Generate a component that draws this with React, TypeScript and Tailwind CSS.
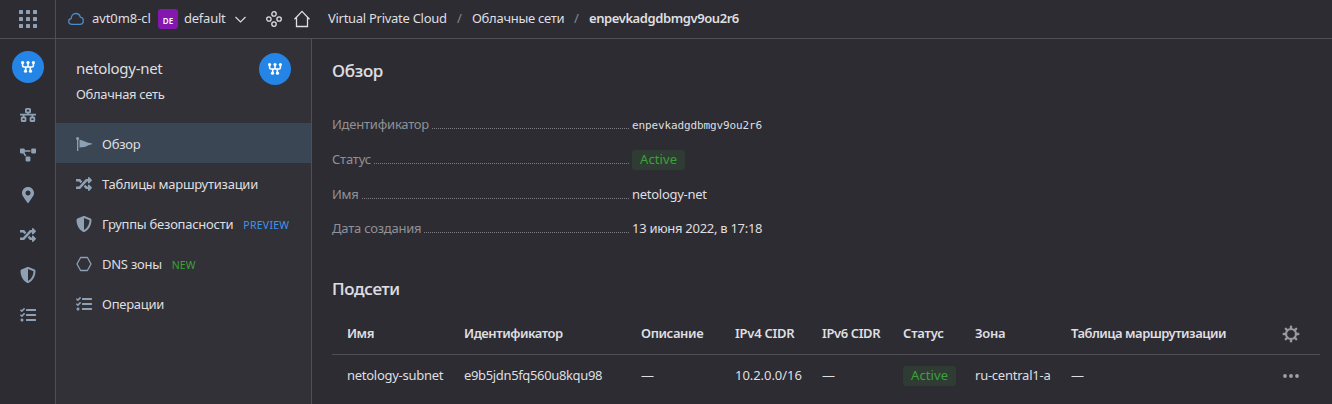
import type { ReactNode } from "react";
import { FaMapMarkerAlt, FaProjectDiagram, FaRandom, FaShieldAlt, FaTasks } from "react-icons/fa";

function NetworkBadge() {
  return (
    <div className="flex size-8 shrink-0 items-center justify-center rounded-full bg-[#2585e6]">
      <svg width="16" height="14" viewBox="0 0 16 14" fill="none" stroke="#fff" strokeWidth="1.600">
        <path d="M2.600 2v3.600q0 1.400 1.400 1.400h8q1.400 0 1.400-1.400V2M8 2v5M5.700 7V11M10.300 7V11" />
        <g fill="#fff" stroke="none">
          <circle cx="2.600" cy="2.500" r="1.600" />
          <circle cx="8" cy="2.500" r="1.600" />
          <circle cx="13.400" cy="2.500" r="1.600" />
          <circle cx="5.500" cy="11.200" r="1.600" />
          <circle cx="10.500" cy="11.200" r="1.600" />
        </g>
      </svg>
    </div>
  );
}

function SubnetsIcon() {
  return (
    <svg width="16" height="14" viewBox="0 0 16 14" fill="none" stroke="currentColor" strokeWidth="1.800">
      <rect x="5.900" y="0.900" width="4.200" height="3.400" rx="0.600" />
      <rect x="1.700" y="9.500" width="3.800" height="3.500" rx="0.600" />
      <rect x="10.500" y="9.500" width="3.800" height="3.500" rx="0.600" />
      <path d="M0 6.700H16M8 4.300V6.600M3.600 6.600V9.600M12.400 6.600V9.600" />
    </svg>
  );
}

function FlagIcon() {
  return (
    <svg width="16" height="16" viewBox="0 0 16 16" fill="currentColor">
      <circle cx="1.600" cy="2.400" r="1.500" />
      <rect x="1" y="2" width="1.300" height="13" />
      <path d="M3.500 3.800C6.500 4.400 9 5.800 12.300 6.700L16 7.500v.8C12.800 8.500 11 10.500 8 11.100 6.400 11.400 5 11.300 3.500 11.500Z" />
    </svg>
  );
}

function HexagonIcon() {
  return (
    <svg width="16" height="16" viewBox="0 0 16 16" fill="none" stroke="currentColor" strokeWidth="1.300" strokeLinejoin="round">
      <path d="M4.600 1.500h6.800L15 8l-3.600 6.500H4.600L1 8Z" />
    </svg>
  );
}

function AppsIcon() {
  return (
    <svg width="18" height="18" viewBox="0 0 18 18" fill="#8ea1b4">
      {[0, 7, 14].map((y) => [0, 7, 14].map((x) => <rect key={`${x}-${y}`} x={x} y={y} width="4" height="4" rx="0.6" />))}
    </svg>
  );
}

function GearIcon() {
  return (
    <svg width="18" height="18" viewBox="0 0 18 18" fill="none" stroke="#99999d">
      <circle cx="9" cy="9" r="5" strokeWidth="2.200" />
      <g strokeWidth="2.400" strokeLinecap="round">
        {[0, 45, 90, 135, 180, 225, 270, 315].map((a) => (
          <path key={a} d="M9 1.700V4" transform={`rotate(${a} 9 9)`} />
        ))}
      </g>
    </svg>
  );
}

function Status() {
  return (
    <span className="flex h-5 items-center rounded-[3px] bg-[#2f3c33] px-2 tracking-[0.1px] text-[#3aa336]">
      <span className="-mt-[2px]">Active</span>
    </span>
  );
}

const rail = [
  <SubnetsIcon />,
  <FaProjectDiagram size={16} />,
  <FaMapMarkerAlt size={16} />,
  <FaRandom size={16} />,
  <FaShieldAlt size={16} />,
  <FaTasks size={16} />,
];

const nav: { icon: ReactNode; label: string; tag?: ReactNode }[] = [
  { icon: <FlagIcon />, label: "Обзор" },
  { icon: <FaRandom size={16} />, label: "Таблицы маршрутизации" },
  {
    icon: <FaShieldAlt size={16} />,
    label: "Группы безопасности",
    tag: <span className="text-[10.5px] tracking-[0.25px] text-[#3d95ee]">PREVIEW</span>,
  },
  {
    icon: <HexagonIcon />,
    label: "DNS зоны",
    tag: <span className="text-[10.5px] tracking-[0px] text-[#3aa336]">NEW</span>,
  },
  { icon: <FaTasks size={16} />, label: "Операции" },
];

const details: { label: string; value: ReactNode; row: string }[] = [
  {
    label: "Идентификатор",
    value: <span className="pt-[3px] font-['DejaVu_Sans_Mono',monospace] text-[11px] tracking-[-0.12px]">enpevkadgdbmgv9ou2r6</span>,
    row: "h-[35px]",
  },
  { label: "Статус", value: <Status />, row: "h-[35px]" },
  { label: "Имя", value: <span className="-mt-[2px]">netology-net</span>, row: "h-[35px]" },
  { label: "Дата создания", value: "13 июня 2022, в 17:18", row: "h-[32px]" },
];

const columns: { title: string; value: ReactNode; width: string; head: string; body: string }[] = [
  { title: "Имя", value: "netology-subnet", width: "w-[117px]", head: "tracking-[-0.5px]", body: "tracking-[-0.27px]" },
  { title: "Идентификатор", value: "e9b5jdn5fq560u8kqu98", width: "w-[177px]", head: "tracking-[-0.45px]", body: "tracking-[-0.35px]" },
  { title: "Описание", value: "—", width: "w-[94px]", head: "tracking-[-0.38px]", body: "" },
  { title: "IPv4 CIDR", value: "10.2.0.0/16", width: "w-[87px]", head: "tracking-[-0.25px]", body: "tracking-[-0.05px]" },
  { title: "IPv6 CIDR", value: "—", width: "w-[81px]", head: "tracking-[-0.4px]", body: "" },
  { title: "Статус", value: <Status />, width: "w-[72px]", head: "tracking-[-0.2px]", body: "" },
  { title: "Зона", value: "ru-central1-a", width: "w-[96px]", head: "tracking-[-0.3px]", body: "tracking-[-0.24px]" },
  { title: "Таблица маршрутизации", value: "—", width: "w-[211px]", head: "tracking-[-0.5px]", body: "" },
];

export default function App() {
  return (
    <div className="flex h-[404px] w-[1332px] flex-col overflow-hidden bg-[#2d2c33] font-['Noto_Sans',sans-serif] text-[13px] leading-5 tracking-[-0.28px] whitespace-nowrap text-[#dfdfe0]">
      <header className="flex h-[39px] shrink-0 border-b border-[#504f55]">
        <div className="flex w-14 shrink-0 items-center justify-center border-r border-[#504f55]">
          <AppsIcon />
        </div>
        <div className="flex h-[38px] w-[272px] shrink-0 items-center pl-3">
          <svg className="shrink-0" width="16" height="14" viewBox="0 0 16 14" fill="none" stroke="#4c8bc9" strokeWidth="1.300">
            <path d="M4 12.400C2 12.400.7 11.200.7 9.500.7 7.900 1.700 6.900 3.200 6.700 3.200 3.500 5.200 1.500 7.800 1.500c2.400 0 4 1.400 4.500 3.700 1.800.2 3 1.500 3 3.500 0 2.200-1.400 3.700-3.500 3.700Z" />
          </svg>
          <span className="-mt-[2px] ml-2 w-[66px] tracking-[-0.08px]">avt0m8-cl</span>
          <span className="flex size-5 items-center justify-center rounded-[3px] bg-[#8317ae] pt-[3px] text-[8px] font-semibold tracking-[0px] text-white">DE</span>
          <span className="-mt-[2px] ml-[6px] w-[51px] tracking-[-0.23px]">default</span>
          <svg className="shrink-0" width="11" height="7" viewBox="0 0 11 7" fill="none" stroke="currentColor" strokeWidth="1.100">
            <path d="M.5 1 5.500 6 10.500 1" />
          </svg>
          <svg className="ml-[20px] shrink-0" width="16" height="16" viewBox="0 0 16 16" fill="none" stroke="currentColor" strokeWidth="1.300">
            <circle cx="8" cy="2.900" r="2.200" />
            <circle cx="2.900" cy="8" r="2.200" />
            <circle cx="13.100" cy="8" r="2.200" />
            <circle cx="8" cy="13.100" r="2.200" />
          </svg>
          <svg className="ml-3 shrink-0" width="17" height="18" viewBox="0 0 17 18" fill="none" stroke="currentColor" strokeWidth="1.300">
            <path d="M.5 9.200 8 1.400 15.500 9.200M2.500 7.400V16.500H13.500V7.400" />
          </svg>
        </div>
        <nav className="flex h-9 items-center">
          <span className="w-[120px]">Virtual Private Cloud</span>
          <span className="ml-[9px] w-[15px] text-[#8a8a8e]">/</span>
          <span className="w-[93px]">Облачные сети</span>
          <span className="ml-[9px] w-[15px] text-[#8a8a8e]">/</span>
          <span className="font-semibold tracking-[-0.42px]">enpevkadgdbmgv9ou2r6</span>
        </nav>
      </header>

      <div className="flex min-h-0 flex-1">
        <aside className="flex w-14 shrink-0 flex-col items-center border-r border-[#504f55] pt-3 text-[#8ea1b4]">
          <NetworkBadge />
          <div className="mt-3 flex flex-col">
            {rail.map((icon, i) => (
              <div key={i} className="flex h-10 items-center justify-center">{icon}</div>
            ))}
          </div>
        </aside>

        <aside className="flex w-64 shrink-0 flex-col border-r border-[#504f55] bg-[#323137]">
          <div className="flex h-[84px] shrink-0 items-start justify-between pt-[14px] pr-5 pl-5">
            <div>
              <div className="mt-[3px] text-[15px] leading-6 tracking-[-0.3px]">netology-net</div>
              <div className="mt-1 tracking-[-0.33px]">Облачная сеть</div>
            </div>
            <NetworkBadge />
          </div>
          {nav.map((item, i) => (
            <div key={item.label} className={`flex h-10 shrink-0 items-center pl-5 ${i === 0 ? "bg-[#3a4654]" : ""}`}>
              <span className="mt-px mr-[10px] flex text-[#8ea1b4]">{item.icon}</span>
              <span className="pt-[2px] tracking-[-0.25px]">{item.label}</span>
              {item.tag && <span className="ml-[10px] flex pt-[4px]">{item.tag}</span>}
            </div>
          ))}
        </aside>

        <main className="flex min-w-0 flex-1 flex-col pl-5">
          <h1 className="mt-5 text-[17px] leading-6 font-medium [-webkit-text-stroke:0.15px_currentColor]">Обзор</h1>
          <div className="mt-[24px] flex w-[600px] flex-col">
            {details.map((d) => (
              <div key={d.label} className={`flex items-center ${d.row}`}>
                <div className="-mt-px flex w-[300px] items-center pr-[3px] text-[#919195]">
                  <span className="tracking-[-0.22px]">{d.label}</span>
                  <span className="mt-[9px] ml-[3px] flex-1 border-b border-dotted border-[#7d7d82]" />
                </div>
                {d.value}
              </div>
            ))}
          </div>
          <h2 className="mt-[33px] text-[17px] leading-6 font-medium [-webkit-text-stroke:0.15px_currentColor]">Подсети</h2>
          <div className="mt-3 flex h-[42px] w-[988px] shrink-0 items-center border-b border-[#504f55] pl-[15px] font-semibold">
            {columns.map((c) => (
              <div key={c.title} className={`-mt-[2px] shrink-0 ${c.width} ${c.head}`}>{c.title}</div>
            ))}
            <GearIcon />
          </div>
          <div className="flex h-[42px] w-[988px] shrink-0 items-center pl-[15px]">
            {columns.map((c) => (
              <div key={c.title} className={`flex shrink-0 ${c.title === "Статус" ? "" : "-mt-[2px]"} ${c.width} ${c.body}`}>{c.value}</div>
            ))}
            <svg width="18" height="4" viewBox="0 0 18 4" fill="#a0a0a4">
              <circle cx="3" cy="2" r="1.900" />
              <circle cx="9" cy="2" r="1.900" />
              <circle cx="15" cy="2" r="1.900" />
            </svg>
          </div>
        </main>
      </div>
    </div>
  );
}
